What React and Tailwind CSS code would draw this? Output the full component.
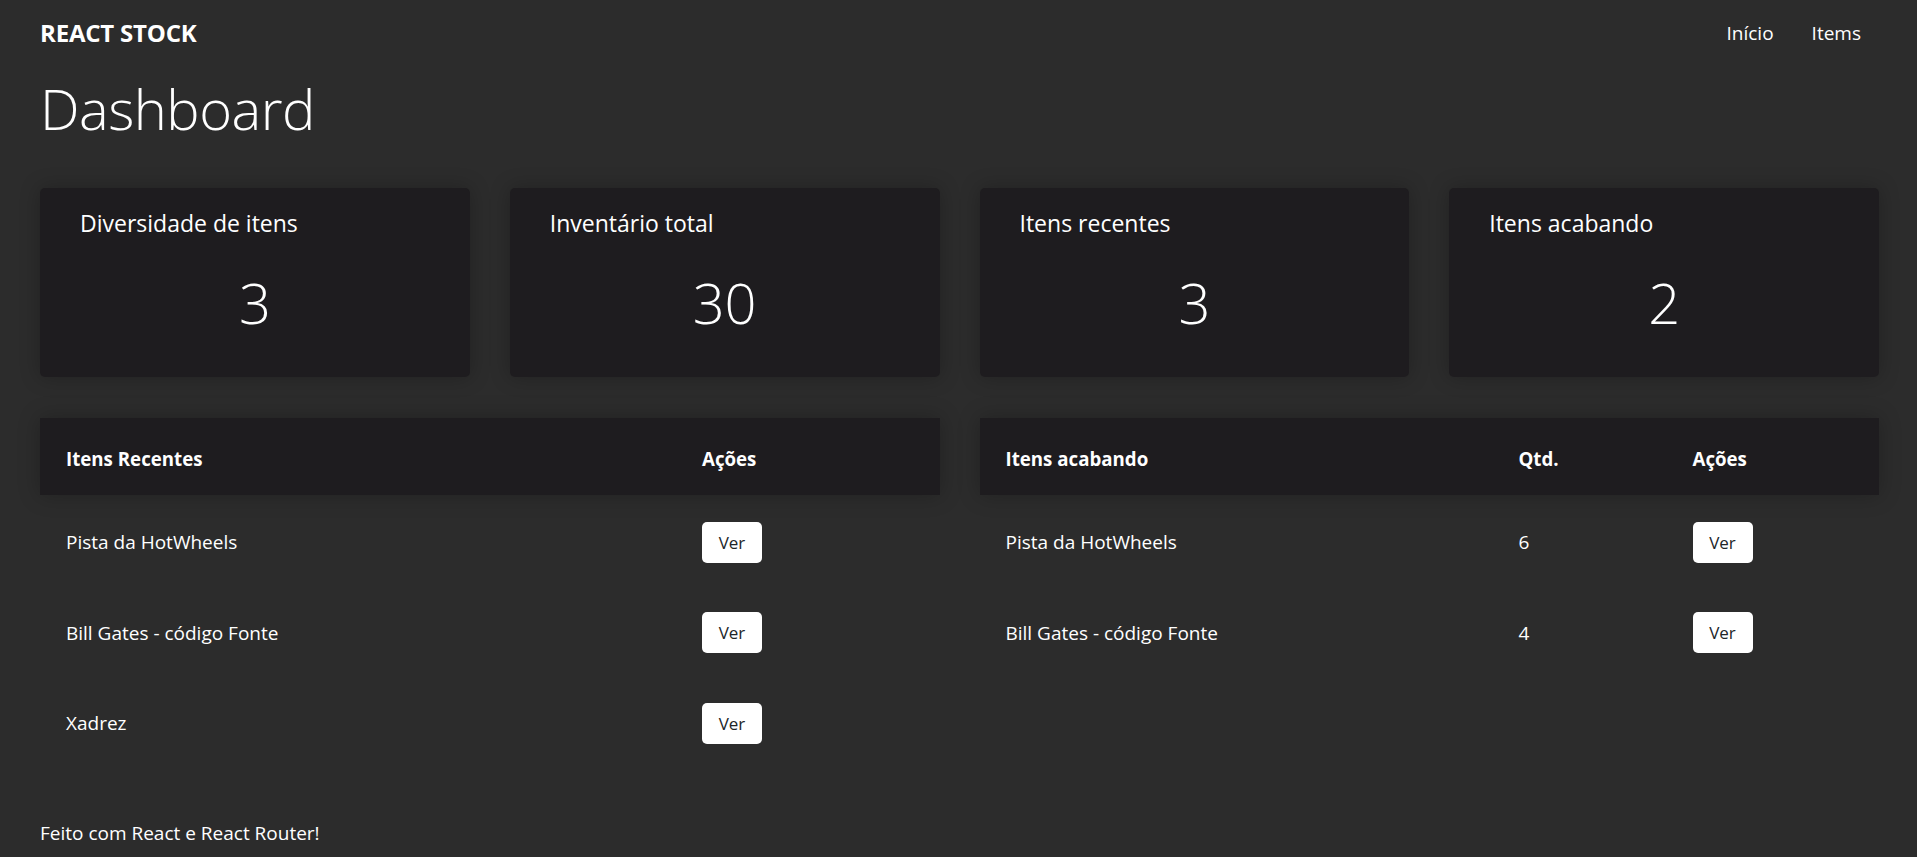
const stats = [
  { title: 'Diversidade de itens', value: 3 },
  { title: 'Inventário total', value: 30 },
  { title: 'Itens recentes', value: 3 },
  { title: 'Itens acabando', value: 2 },
];

const recent = ['Pista da HotWheels', 'Bill Gates - código Fonte', 'Xadrez'];

const running = [
  { name: 'Pista da HotWheels', qty: 6 },
  { name: 'Bill Gates - código Fonte', qty: 4 },
];

function VerButton() {
  return (
    <button className="w-[60px] h-[41px] rounded-[5px] bg-white text-[#212529] text-[17px] leading-none">
      Ver
    </button>
  );
}

export default function App() {
  return (
    <div
      className="min-h-[857px] bg-[#2c2c2c] text-white pl-10 pr-[38px]"
      style={{ fontFamily: '"Open Sans", "Noto Sans", sans-serif' }}
    >
      {/* Navbar */}
      <header className="flex items-center justify-between h-[66px]">
        <span className="text-[24px] font-bold tracking-[-0.2px]">REACT STOCK</span>
        <nav className="flex gap-[38px] text-[19px] pr-[18px]">
          <a>Início</a>
          <a>Items</a>
        </nav>
      </header>

      <h1 className="text-[56px] font-light leading-none mt-[14px] tracking-[-0.5px]">Dashboard</h1>

      {/* Stat cards */}
      <div className="grid grid-cols-4 gap-10 mt-[52px]">
        {stats.map((s) => (
          <div
            key={s.title}
            className="h-[189px] rounded-[5px] bg-[#1e1c1f] shadow-[0_0_20px_rgba(0,0,0,0.25)] px-10 pt-[18px]"
          >
            <h3 className="text-[23px]">{s.title}</h3>
            <p className="text-[56px] font-light text-center mt-[33px] leading-none">{s.value}</p>
          </div>
        ))}
      </div>

      {/* Tables */}
      <div className="grid grid-cols-2 gap-10 mt-[41px]">
        <div>
          <div className="grid grid-cols-[636px_1fr] h-[77px] pt-[5px] items-center bg-[#1e1c1f] shadow-[0_0_20px_rgba(0,0,0,0.25)] text-[18.7px] font-bold">
            <span className="pl-[26px]">Itens Recentes</span>
            <span className="pl-[26px]">Ações</span>
          </div>
          {recent.map((name) => (
            <div key={name} className="grid grid-cols-[636px_1fr] h-[90.5px] pt-[4px] items-center text-[19px]">
              <span className="pl-[26px]">{name}</span>
              <span className="pl-[26px]">
                <VerButton />
              </span>
            </div>
          ))}
        </div>

        <div>
          <div className="grid grid-cols-[513px_174px_1fr] h-[77px] pt-[5px] items-center bg-[#1e1c1f] shadow-[0_0_20px_rgba(0,0,0,0.25)] text-[18.7px] font-bold">
            <span className="pl-[26px]">Itens acabando</span>
            <span className="pl-[26px]">Qtd.</span>
            <span className="pl-[26px]">Ações</span>
          </div>
          {running.map((item) => (
            <div key={item.name} className="grid grid-cols-[513px_174px_1fr] h-[90.5px] pt-[4px] items-center text-[19px]">
              <span className="pl-[26px]">{item.name}</span>
              <span className="pl-[26px]">{item.qty}</span>
              <span className="pl-[26px]">
                <VerButton />
              </span>
            </div>
          ))}
        </div>
      </div>

      <footer className="mt-[52px] pb-4 text-[19px]">Feito com React e React Router!</footer>
    </div>
  );
}
